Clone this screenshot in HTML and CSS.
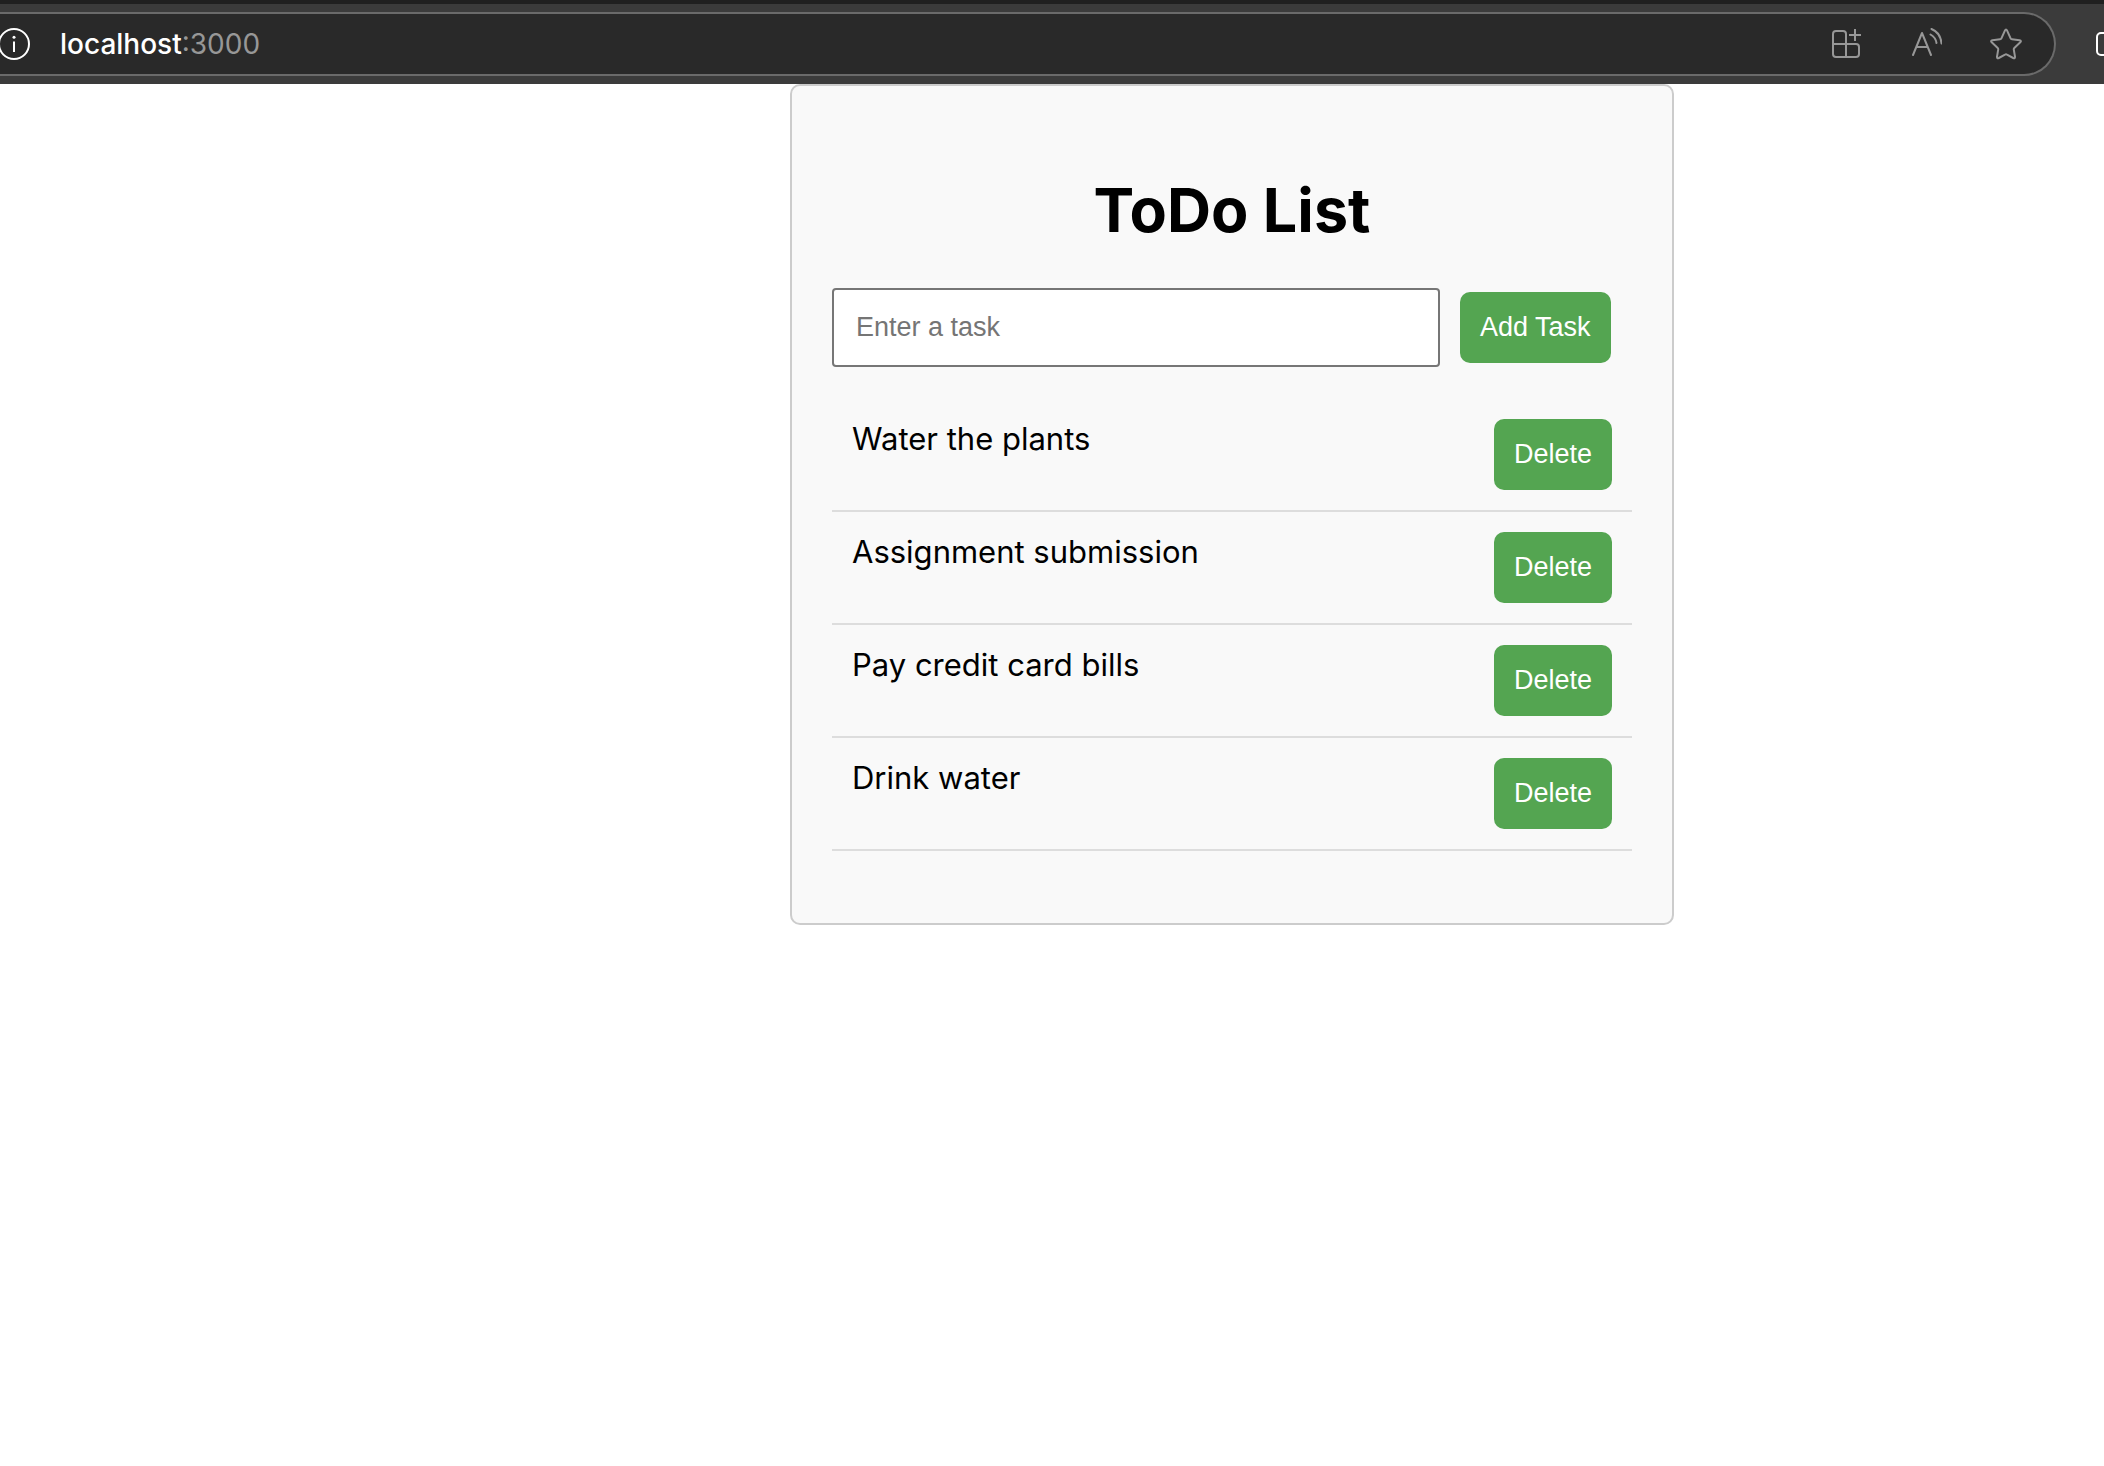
FILE: index.html
```html
<!DOCTYPE html>
<html lang="en">
<head>
<meta charset="utf-8">
<meta name="viewport" content="width=device-width, initial-scale=1">
<title>ToDo List</title>
<link rel="stylesheet" href="styles.css">
</head>
<body>
<header class="toolbar">
  <div class="address">
    <button class="icon-button" type="button" aria-label="Site information">
      <svg width="32" height="32" viewBox="0 0 32 32" fill="none" stroke="#fff" stroke-width="2"><circle cx="14" cy="16" r="15"/><path d="M14 13.5V24"/><circle cx="14" cy="9.2" r="1.5" fill="#fff" stroke="none"/></svg>
    </button>
    <div class="url">localhost<span class="port">:3000</span></div>
    <div class="actions">
      <button class="icon-button" type="button" aria-label="Install app">
        <svg width="32" height="32" viewBox="0 0 32 32" fill="none" stroke="#979797" stroke-width="2"><path d="M16 16V6a3 3 0 0 0-3-3H6a3 3 0 0 0-3 3v20a3 3 0 0 0 3 3h20a3 3 0 0 0 3-3v-7a3 3 0 0 0-3-3H3M16 16v13M25 1v12M19 7h12"/></svg>
      </button>
      <button class="icon-button" type="button" aria-label="Read aloud">
        <svg width="32" height="32" viewBox="0 0 32 32" fill="none" stroke="#979797" stroke-width="2" stroke-linecap="round" stroke-linejoin="round"><path d="M3 27 12 5l9 22M6.500 19h11M20.500 6.500c3.500 2 5.500 5 6 8.500M21.500 1c6 2.500 9.500 8 10 14.500"/></svg>
      </button>
      <button class="icon-button" type="button" aria-label="Add to favorites">
        <svg width="32" height="32" viewBox="0 0 32 32" fill="none" stroke="#979797" stroke-width="2" stroke-linejoin="round"><path d="M15 2.400q1-2 2 0l3.600 7.900q.4.900 1.400 1l7.600 1q2.200.4.700 2l-6 5.700q-.7.700-.5 1.700l1.200 7q.2 2.200-1.800 1.300L17 26.600q-1-.6-2 0L8.800 30q-2 .9-1.800-1.300l1.200-7q.2-1-.5-1.700l-6-5.700q-1.500-1.600.7-2l7.600-1q1-.1 1.400-1z"/></svg>
      </button>
    </div>
  </div>
  <button class="icon-button" type="button" aria-label="Split screen">
    <svg width="8" height="32" viewBox="0 0 8 32" fill="none" stroke="#fff" stroke-width="2"><path d="M8 5H5a4 4 0 0 0-4 4v14a4 4 0 0 0 4 4h3"/></svg>
  </button>
</header>
<main class="page">
  <section class="card">
    <h1 class="title">ToDo List</h1>
    <form class="task-form">
      <input class="task-input" type="text" placeholder="Enter a task" aria-label="Enter a task">
      <button class="button" type="button">Add Task</button>
    </form>
    <ul class="tasks">
      <li class="task"><span>Water the plants</span><button class="button" type="button">Delete</button></li>
      <li class="task"><span>Assignment submission</span><button class="button" type="button">Delete</button></li>
      <li class="task"><span>Pay credit card bills</span><button class="button" type="button">Delete</button></li>
      <li class="task"><span>Drink water</span><button class="button" type="button">Delete</button></li>
    </ul>
  </section>
</main>
</body>
</html>
```

FILE: styles.css
```css
* {
  box-sizing: border-box;
}

body {
  margin: 0;
  background: #fff;
  color: #000;
  font-family: Inter, "Liberation Sans", sans-serif;
}

.toolbar {
  display: flex;
  align-items: center;
  gap: 40px;
  padding: 8px 0;
  border-top: 4px solid #202020;
  background: #3b3b3b;
}

.address {
  display: flex;
  flex: 1;
  align-items: center;
  height: 64px;
  padding-right: 32px;
  border: 2px solid #6a6a6a;
  border-left: 0;
  border-radius: 0 32px 32px 0;
  background: #292929;
}

.icon-button {
  display: flex;
  padding: 0;
  border: 0;
  background: none;
}

.url {
  margin-left: 28px;
  color: #fff;
  font-size: 28px;
  font-weight: 500;
  line-height: 32px;
}

.port {
  color: #979797;
  font-weight: 400;
}

.actions {
  display: flex;
  gap: 48px;
  margin-left: auto;
}

.page {
  padding-left: 360px;
}

.card {
  max-width: 884px;
  margin: 0 auto;
  padding: 40px;
  border: 2px solid #ccc;
  border-radius: 10px;
  background: #f9f9f9;
}

.title {
  margin: 46px 0 40px;
  font-size: 61px;
  font-weight: 700;
  line-height: 76px;
  text-align: center;
}

.task-form {
  display: flex;
  align-items: center;
  gap: 20px;
}

.task-input {
  width: 76%;
  height: 79px;
  padding: 0 22px;
  border: 2px solid #767676;
  border-radius: 4px;
  background: #fff;
  font-family: "Liberation Sans", Arial, sans-serif;
  font-size: 27px;
}

.task-input::placeholder {
  color: #757575;
}

.button {
  padding: 20px;
  border: 0;
  border-radius: 10px;
  background: #54a551;
  color: #fff;
  font-family: "Liberation Sans", Arial, sans-serif;
  font-size: 27px;
  line-height: 31px;
}

.tasks {
  margin: 32px 0;
  padding: 0;
  list-style: none;
}

.task {
  display: flex;
  align-items: flex-start;
  justify-content: space-between;
  padding: 20px;
  border-bottom: 2px solid #ddd;
  font-size: 31px;
  line-height: 40px;
}
```
